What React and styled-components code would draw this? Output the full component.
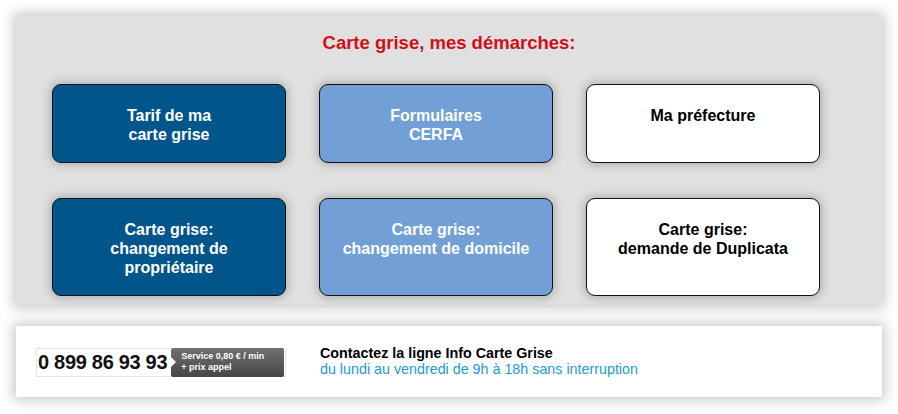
import React from "react";
import styled, { createGlobalStyle } from "styled-components";

const Global = createGlobalStyle`
  html, body { margin: 0; padding: 0; background: #ffffff; }
  body { font-family: Arial, "Liberation Sans", sans-serif; }
`;

const Page = styled.div`
  padding: 16px;
  display: flex;
  flex-direction: column;
  gap: 21px;
`;

const Panel = styled.section`
  background: #e0e0e0;
  box-shadow: 0 0 12px 3px rgba(0, 0, 0, 0.22);
  padding: 17px 36px 10px;
  height: 289px;
  box-sizing: border-box;
`;

const Title = styled.h2`
  margin: 0 0 31px;
  text-align: center;
  color: #d20f16;
  font-size: 18.5px;
  line-height: 20px;
  font-weight: bold;
`;

const Grid = styled.div`
  display: grid;
  grid-template-columns: repeat(3, 234px);
  column-gap: 33px;
  row-gap: 35px;
`;

const tones = {
  dark: { bg: "#00568a", fg: "#ffffff" },
  light: { bg: "#729fd6", fg: "#ffffff" },
  white: { bg: "#ffffff", fg: "#000000" },
};

const Tile = styled.a`
  display: block;
  box-sizing: border-box;
  background: ${(p) => tones[p.$tone].bg};
  color: ${(p) => tones[p.$tone].fg};
  border: 1px solid #111;
  border-radius: 9px;
  box-shadow: 0 0 10px 2px rgba(0, 0, 0, 0.22);
  padding: 21px 8px 18px;
  text-align: center;
  font-size: 16px;
  font-weight: bold;
  line-height: 19px;
  text-decoration: none;
  cursor: pointer;
`;

const InfoBar = styled.section`
  background: #ffffff;
  box-shadow: 0 0 12px 3px rgba(0, 0, 0, 0.22);
  height: 71px;
  box-sizing: border-box;
  padding: 0 20px;
  display: flex;
  align-items: center;
  gap: 34px;
`;

const PhoneBox = styled.div`
  display: flex;
  align-items: center;
  height: 29px;
  width: 250px;
  box-sizing: border-box;
  border: 1px solid #e4e4e4;
  background: #fff;
  margin-top: 2px;
`;

const Number = styled.span`
  font-size: 20px;
  font-weight: bold;
  color: #111;
  padding-left: 1px;
  letter-spacing: -0.3px;
  white-space: nowrap;
`;

const Tag = styled.div`
  position: relative;
  margin-left: 4px;
  height: 29px;
  width: 113px;
  box-sizing: border-box;
  border-radius: 2px;
  background: linear-gradient(#707070, #464646);
  color: #fff;
  font-size: 9px;
  font-weight: bold;
  line-height: 11px;
  padding: 3px 0 0 10px;
  white-space: nowrap;
  &::before {
    content: "";
    position: absolute;
    left: 0;
    top: 9px;
    border-style: solid;
    border-width: 5px 0 5px 5px;
    border-color: transparent transparent transparent #fff;
  }
`;

const Contact = styled.div`
  font-size: 14.3px;
  line-height: 16px;
  margin-top: -2px;
`;

const ContactTitle = styled.div`
  font-weight: bold;
  color: #000;
`;

const ContactHours = styled.div`
  color: #1e9bd7;
`;

const tiles = [
  { tone: "dark", lines: ["Tarif de ma", "carte grise"] },
  { tone: "light", lines: ["Formulaires", "CERFA"] },
  { tone: "white", lines: ["Ma préfecture"] },
  { tone: "dark", lines: ["Carte grise:", "changement de", "propriétaire"] },
  { tone: "light", lines: ["Carte grise:", "changement de domicile"] },
  { tone: "white", lines: ["Carte grise:", "demande de Duplicata"] },
];

export default function App() {
  return (
    <>
      <Global />
      <Page>
        <Panel>
          <Title>Carte grise, mes démarches:</Title>
          <Grid>
            {tiles.map((t, i) => (
              <Tile key={i} $tone={t.tone}>
                {t.lines.map((l, j) => (
                  <React.Fragment key={j}>
                    {j > 0 && <br />}
                    {l}
                  </React.Fragment>
                ))}
              </Tile>
            ))}
          </Grid>
        </Panel>
        <InfoBar>
          <PhoneBox>
            <Number>0 899 86 93 93</Number>
            <Tag>
              Service 0,80 € / min
              <br />+ prix appel
            </Tag>
          </PhoneBox>
          <Contact>
            <ContactTitle>Contactez la ligne Info Carte Grise</ContactTitle>
            <ContactHours>
              du lundi au vendredi de 9h à 18h sans interruption
            </ContactHours>
          </Contact>
        </InfoBar>
      </Page>
    </>
  );
}
